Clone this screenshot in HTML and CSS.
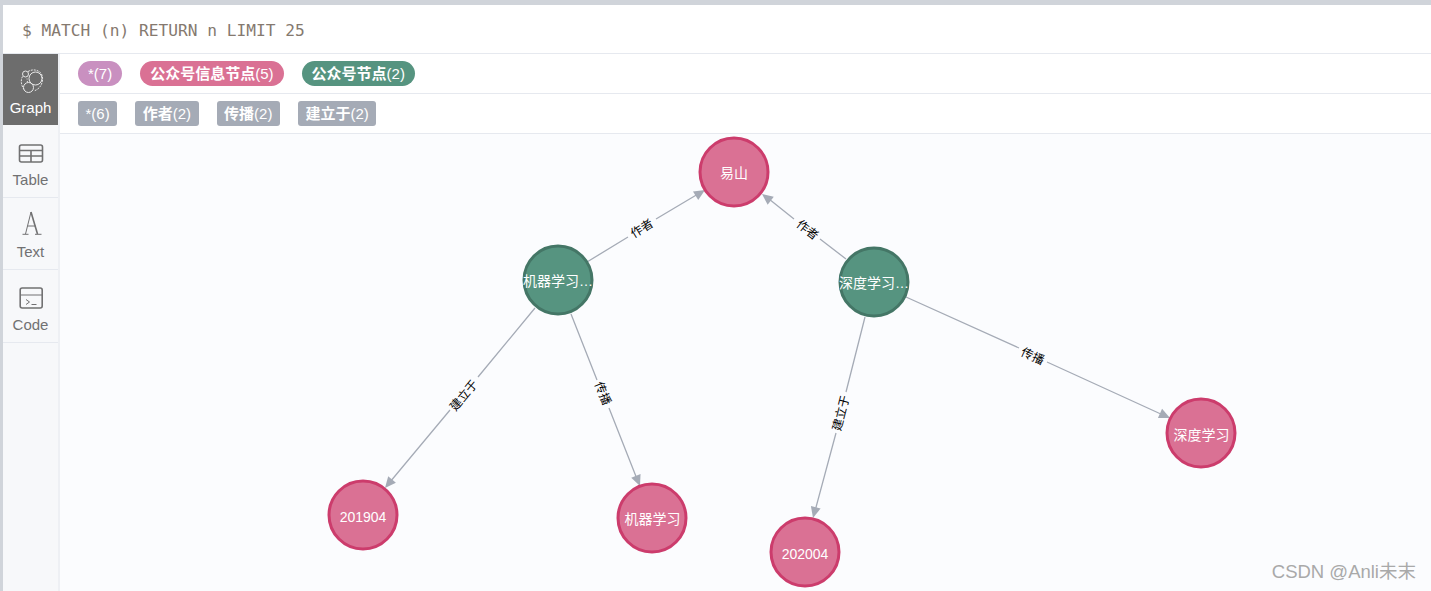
FILE: index.html
```html
<!DOCTYPE html>
<html lang="en">
<head>
    <meta charset="UTF-8">
    <meta name="viewport" content="width=device-width, initial-scale=1.0">
    <title>Neo4j Browser</title>
    <link rel="stylesheet" href="styles.css">
</head>
<body>
    <div class="app">
        <div class="editor">$ MATCH (n) RETURN n LIMIT 25</div>
        <div class="content">
            <div class="sidebar">
                <div class="tab tab-active">
                    <svg class="tab-icon icon-graph" width="26" height="27" viewBox="0 0 26 27">
                        <circle cx="17.500" cy="10.500" r="6.500"/>
                        <circle cx="7.500" cy="6" r="3"/>
                        <circle cx="10.500" cy="19.500" r="5"/>
                        <path d="M10 3.500C15 .5 21 2 23.500 6c2 4 1 9-1 12-1.500 2.500-4 4-6.500 5M4.500 8.500C2.500 12 3 17 6 21.500" stroke-dasharray="2 1"/>
                        <path d="M9 10.500l.5 4" stroke-dasharray="1 1.500"/>
                    </svg>
                    <span>Graph</span>
                </div>
                <div class="tab tab-table">
                    <svg class="tab-icon icon-table" width="26" height="19" viewBox="0 0 26 19">
                        <rect x="1.500" y="1" width="23" height="17" rx="2" class="thick"/>
                        <path d="M1.500 6.500h23M1.500 12h23M13 6.500V18" class="thick"/>
                    </svg>
                    <span>Table</span>
                </div>
                <div class="tab">
                    <svg class="tab-icon icon-text" width="26" height="24" viewBox="0 0 26 24">
                        <path d="M13 1L7.500 23M9.500 15h8M4.500 23.300h6M17 23.300h6.500"/>
                        <path d="M13 1l6.500 22" class="thick"/>
                    </svg>
                    <span>Text</span>
                </div>
                <div class="tab tab-code">
                    <svg class="tab-icon icon-code" width="26" height="22" viewBox="0 0 26 22">
                        <rect x="2.200" y="1" width="22" height="20" rx="2" class="thick"/>
                        <path d="M2.200 8h22M8 12.500l3.500 2.500-3.500 2.500M13.500 17.500h5"/>
                    </svg>
                    <span>Code</span>
                </div>
            </div>
            <div class="main">
                <div class="legend-row">
                    <span class="pill pill-all">*(7)</span>
                    <span class="pill pill-info"><b>公众号信息节点</b>(5)</span>
                    <span class="pill pill-account"><b>公众号节点</b>(2)</span>
                </div>
                <div class="legend-row">
                    <span class="tag">*(6)</span>
                    <span class="tag"><b>作者</b>(2)</span>
                    <span class="tag"><b>传播</b>(2)</span>
                    <span class="tag"><b>建立于</b>(2)</span>
                </div>
                <div class="canvas">
                    <svg class="graph" width="1371" height="457" viewBox="60 134 1371 457">
                        <!-- edges, split around their labels -->
                        <path class="edge" d="M587 262L628 237M656 219L698 194"/>
                        <polygon class="head" points="0,0 -11,-5 -11,5" transform="translate(705 190) rotate(-31.4)"/>
                        <path class="edge" d="M846 259L820 239M794 219L769 199"/>
                        <polygon class="head" points="0,0 -11,-5 -11,5" transform="translate(762 194) rotate(-142.3)"/>
                        <path class="edge" d="M535 308L478 377M450 410L390 482"/>
                        <polygon class="head" points="0,0 -11,-5 -11,5" transform="translate(385 488) rotate(129.8)"/>
                        <path class="edge" d="M571 314L597 380M609 408L637 479"/>
                        <polygon class="head" points="0,0 -11,-5 -11,5" transform="translate(640 486) rotate(68.1)"/>
                        <path class="edge" d="M865 317L846 392M836 433L815 511"/>
                        <polygon class="head" points="0,0 -11,-5 -11,5" transform="translate(813 518) rotate(104.5)"/>
                        <path class="edge" d="M906 297L1019 348M1047 362L1163 415"/>
                        <polygon class="head" points="0,0 -11,-5 -11,5" transform="translate(1170 418) rotate(24.6)"/>

                        <text class="edge-label" transform="translate(644 232) rotate(-31.400)">作者</text>
                        <text class="edge-label" transform="translate(805 233) rotate(37.700)">作者</text>
                        <text class="edge-label" transform="translate(467 398) rotate(-50.200)">建立于</text>
                        <text class="edge-label" transform="translate(599 395) rotate(68.100)">传播</text>
                        <text class="edge-label" transform="translate(845 414) rotate(-75.500)">建立于</text>
                        <text class="edge-label" transform="translate(1031 360) rotate(24.600)">传播</text>

                        <circle class="node node-info" cx="734" cy="172" r="34"/>
                        <text class="node-label" x="734" y="178">易山</text>
                        <circle class="node node-account" cx="558" cy="280" r="34"/>
                        <text class="node-label" x="558" y="286">机器学习…</text>
                        <circle class="node node-account" cx="874" cy="282" r="34"/>
                        <text class="node-label" x="874" y="288">深度学习…</text>
                        <circle class="node node-info" cx="363" cy="515" r="34"/>
                        <text class="node-label" x="363" y="522">201904</text>
                        <circle class="node node-info" cx="652" cy="518" r="34"/>
                        <text class="node-label" x="652.500" y="523.500">机器学习</text>
                        <circle class="node node-info" cx="805" cy="552" r="34"/>
                        <text class="node-label" x="805" y="559">202004</text>
                        <circle class="node node-info" cx="1201" cy="433" r="34"/>
                        <text class="node-label" x="1201.500" y="439.500">深度学习</text>
                    </svg>
                    <div class="watermark">CSDN @Anli未末</div>
                </div>
            </div>
        </div>
    </div>
</body>
</html>
```

FILE: styles.css
```css
* { box-sizing: border-box; }
html, body { height: 100%; }
body { margin: 0; padding: 5px 0 0 3px; background: #d0d4da; font-family: "Liberation Sans", "Noto Sans CJK SC", sans-serif; overflow: hidden; }
.app { height: 586px; background: #fff; display: flex; flex-direction: column; }
.editor { height: 49px; padding: 16px 0 0 19px; border-bottom: 1px solid #e6e9ef; font-family: "DejaVu Sans Mono", monospace; font-size: 16.2px; line-height: 19px; color: #85796f; }
.content { flex: 1; display: flex; min-height: 0; }
.sidebar { width: 57px; flex: none; background: #f7f8fa; border-right: 2px solid #eef0f4; }
.tab { height: 72px; display: flex; flex-direction: column; align-items: center; justify-content: flex-end; padding-bottom: 9px; border-bottom: 1px solid #e6e9ef; font-size: 15px; line-height: 16px; color: #717172; }
.tab-active { height: 71px; background: #6d6d6d; color: #fff; border-bottom: none; }
.tab-table, .tab-code { height: 73px; }
.tab-icon { fill: none; stroke: #717172; stroke-width: 1; }
.tab-icon .thick { stroke-width: 1.6; }
.icon-graph { margin-bottom: 5px; stroke: #e8e8e8; }
.icon-table { margin-bottom: 9px; }
.icon-text { margin-bottom: 9px; }
.icon-code { margin-bottom: 8px; }
.main { flex: 1; min-width: 0; display: flex; flex-direction: column; }
.legend-row { height: 40px; padding: 7px 0 0 18px; border-bottom: 1px solid #e6e9ef; display: flex; gap: 18px; }
.pill, .tag { height: 25px; line-height: 25px; font-size: 15px; color: #fff; white-space: nowrap; }
.pill { padding: 0 10px; border-radius: 13px; }
.tag { padding: 0 7.5px; border-radius: 3px; background: #a5abb6; }
.pill-all { background: #c990c0; }
.pill-info { background: #da7194; }
.pill-account { background: #569480; }
.canvas { flex: 1; position: relative; background: #fbfcfe; overflow: hidden; }
.graph { display: block; }
.edge { fill: none; stroke: #a5abb6; stroke-width: 1.3; }
.head { fill: #a5abb6; }
.edge-label { font-size: 12px; fill: #000; text-anchor: middle; }
.node { stroke-width: 3; }
.node-info { fill: #da7194; stroke: #cc3c6c; }
.node-account { fill: #569480; stroke: #447666; }
.node-label { font-size: 14px; fill: #fff; text-anchor: middle; }
.watermark { position: absolute; right: 15px; bottom: 7px; font-size: 18.500px; line-height: 24px; color: #a9a9a9; }
```
